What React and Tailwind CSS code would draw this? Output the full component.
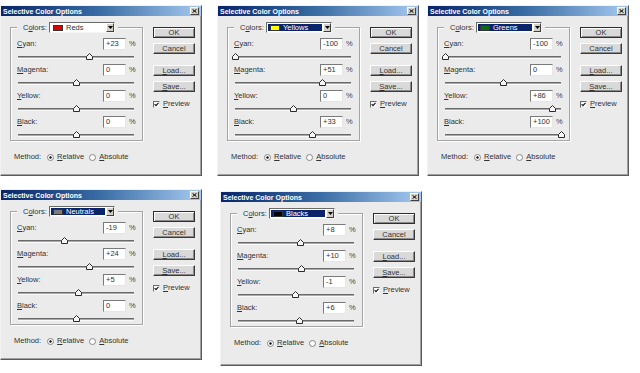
import React from "react";

const DIALOGS = [
  { name: "Reds", swatch: "bg-[#d80000]", selected: false, values: [23, 0, 0, 0], h: "h-[171px]" },
  { name: "Yellows", swatch: "bg-[#ffff00]", selected: true, values: [-100, 51, 0, 33], h: "h-[171px]" },
  { name: "Greens", swatch: "bg-[#0b6a12]", selected: true, values: [-100, 0, 86, 100], h: "h-[171px]" },
  { name: "Neutrals", swatch: "bg-[#7c7c7c]", selected: true, values: [-19, 24, 5, 0], h: "h-[171px]" },
  { name: "Blacks", swatch: "bg-[#000000]", selected: true, values: [8, 10, -1, 6], h: "h-[175px]" },
];

function U({ children }) {
  return <span className="underline underline-offset-[1px]">{children}</span>;
}

const LABELS = [
  <><U>C</U>yan:</>,
  <><U>M</U>agenta:</>,
  <><U>Y</U>ellow:</>,
  <><U>B</U>lack:</>,
];

function fmt(v) {
  if (v > 0) return "+" + v;
  return String(v);
}

function TitleBar() {
  return (
    <div className="flex h-[10px] items-center justify-between bg-linear-to-r from-[#0a246a] via-[#3a6ea5] to-[#a6caf0] pl-[2px] pr-[2px]">
      <span className="text-[7px] font-bold leading-none text-white">Selective Color Options</span>
      <div className="flex h-[8px] w-[9px] items-center justify-center border border-t-white border-l-white border-r-[#404040] border-b-[#404040] bg-[#d4d0c8]">
        <svg width="5" height="4" viewBox="0 0 5 4">
          <path d="M0.5 0.3 L4.5 3.7 M4.5 0.3 L0.5 3.7" stroke="#000" strokeWidth="1" />
        </svg>
      </div>
    </div>
  );
}

function Dropdown({ name, swatch, selected }) {
  return (
    <div className="flex h-[11px] w-[66px] border border-t-[#6a6a6a] border-l-[#6a6a6a] border-b-[#f5f5f5] border-r-[#f5f5f5] bg-white">
      <div
        className={
          selected
            ? "m-[1px] flex flex-1 items-center bg-[#0a246a] pl-[2px] text-white"
            : "m-[1px] flex flex-1 items-center pl-[2px] text-[#333]"
        }
      >
        <span className={"h-[6px] w-[10px] border border-[#333] " + swatch} />
        <span className="ml-[3px] leading-none">{name}</span>
      </div>
      <div className="flex w-[8px] items-center justify-center border border-t-white border-l-white border-r-[#404040] border-b-[#404040] bg-[#d4d0c8]">
        <svg width="5" height="3" viewBox="0 0 5 3">
          <path d="M0 0 H5 L2.5 3 Z" fill="#000" />
        </svg>
      </div>
    </div>
  );
}

function NumberBox({ value }) {
  return (
    <div className="flex h-[12px] w-[23px] items-center border border-t-[#7a7a7a] border-l-[#7a7a7a] border-b-[#e6e6e6] border-r-[#e6e6e6] bg-white pl-[2px] text-[#333] leading-none">
      {fmt(value)}
    </div>
  );
}

function Slider({ value }) {
  const left = ((value + 100) / 200) * 116 - 3.5;
  return (
    <div className="relative ml-[1px] h-[3px] w-[116px] border-t border-b border-t-[#6a6a6a] border-b-[#fbfbfb] bg-[#a9a9a9]">
      <svg width="7" height="7" viewBox="0 0 7 7" className="absolute top-[-4px]" style={{ left }}>
        <polygon points="0.5,6.5 0.5,3.5 3.5,0.5 6.5,3.5 6.5,6.5" fill="#f6f6f6" stroke="#2b2b2b" strokeWidth="1" />
      </svg>
    </div>
  );
}

function Button({ children, isDefault }) {
  return (
    <div
      className={
        isDefault
          ? "flex h-[11px] w-[42px] items-center justify-center border border-[#2e2e2e] bg-[#d9d9d9] text-[#333] shadow-[inset_1px_1px_0_#ffffff,inset_-1px_-1px_0_#8a8a8a]"
          : "flex h-[11px] w-[42px] items-center justify-center border border-t-white border-l-white border-r-[#3a3a3a] border-b-[#3a3a3a] bg-[#d9d9d9] text-[#333] shadow-[inset_-1px_-1px_0_#8a8a8a]"
      }
    >
      <span className="leading-none">{children}</span>
    </div>
  );
}

function Radio({ checked }) {
  return (
    <svg width="7" height="7" viewBox="0 0 7 7">
      <circle cx="3.5" cy="3.5" r="3" fill="#fff" stroke="#7a7a7a" strokeWidth="0.9" />
      {checked ? <circle cx="3.5" cy="3.5" r="1.2" fill="#111" /> : null}
    </svg>
  );
}

function Checkbox() {
  return (
    <div className="flex h-[7px] w-[7px] items-center justify-center border border-t-[#6a6a6a] border-l-[#6a6a6a] border-b-[#eeeeee] border-r-[#eeeeee] bg-white">
      <svg width="5" height="5" viewBox="0 0 5 5">
        <path d="M0.6 2.2 L2 3.7 L4.5 0.8" stroke="#111" strokeWidth="1.1" fill="none" />
      </svg>
    </div>
  );
}

function Dialog({ d }) {
  return (
    <div
      className={
        "flex w-[202px] flex-col border border-t-[#f2f2f2] border-l-[#f2f2f2] border-r-[#5a5a5a] border-b-[#5a5a5a] bg-[#ebebeb] text-[7.5px] text-[#333] shadow-[inset_-1px_-1px_0_#a0a0a0] " +
        d.h
      }
    >
      <TitleBar />
      <div className="flex pl-[9px] pt-[6px]">
        <fieldset className="w-[133px] border border-[#a4a4a4] pl-[6px] pt-[5px] shadow-[inset_1px_1px_0_#ffffff,1px_1px_0_#ffffff]">
          <legend className="bg-[#ebebeb] pl-[6px] pr-[3px]">
            <div className="flex h-[11px] items-center">
              <span className="w-[26px] leading-none">
                C<U>o</U>lors:
              </span>
              <Dropdown name={d.name} swatch={d.swatch} selected={d.selected} />
            </div>
          </legend>
          {d.values.map((v, i) => (
            <div key={i} className={i < 3 ? "pb-[5px]" : "pb-[3px]"}>
              <div className="flex h-[12px] items-center">
                <span className="w-[86px] leading-none">{LABELS[i]}</span>
                <NumberBox value={v} />
                <span className="ml-[3px] leading-none text-[#444]">%</span>
              </div>
              <div className="pt-[6px]">
                <Slider value={v} />
              </div>
            </div>
          ))}
        </fieldset>
        <div className="ml-[10px] flex flex-col pt-[5px]">
          <Button isDefault>OK</Button>
          <div className="mt-[5px]">
            <Button>Cancel</Button>
          </div>
          <div className="mt-[11px]">
            <Button>
              <U>L</U>oad...
            </Button>
          </div>
          <div className="mt-[5px]">
            <Button>
              <U>S</U>ave...
            </Button>
          </div>
          <div className="mt-[8px] flex h-[8px] items-center">
            <Checkbox />
            <span className="ml-[3px] leading-none">
              <U>P</U>review
            </span>
          </div>
        </div>
      </div>
      <div className="mt-[10px] flex h-[12px] items-center pl-[13px]">
        <span className="leading-none">Method:</span>
        <span className="ml-[6px] flex">
          <Radio checked />
        </span>
        <span className="ml-[3px] leading-none">
          <U>R</U>elative
        </span>
        <span className="ml-[5px] flex">
          <Radio />
        </span>
        <span className="ml-[3px] leading-none">
          <U>A</U>bsolute
        </span>
      </div>
    </div>
  );
}

export default function App() {
  return (
    <div className="flex h-[373px] w-[640px] flex-col overflow-hidden bg-white font-['Liberation_Sans',Arial,sans-serif]">
      <div className="flex items-start pt-[5px]">
        <Dialog d={DIALOGS[0]} />
        <div className="ml-[15px]">
          <Dialog d={DIALOGS[1]} />
        </div>
        <div className="ml-[8px]">
          <Dialog d={DIALOGS[2]} />
        </div>
      </div>
      <div className="mt-[13px] flex items-start">
        <Dialog d={DIALOGS[3]} />
        <div className="ml-[18px] mt-[2px]">
          <Dialog d={DIALOGS[4]} />
        </div>
      </div>
    </div>
  );
}
